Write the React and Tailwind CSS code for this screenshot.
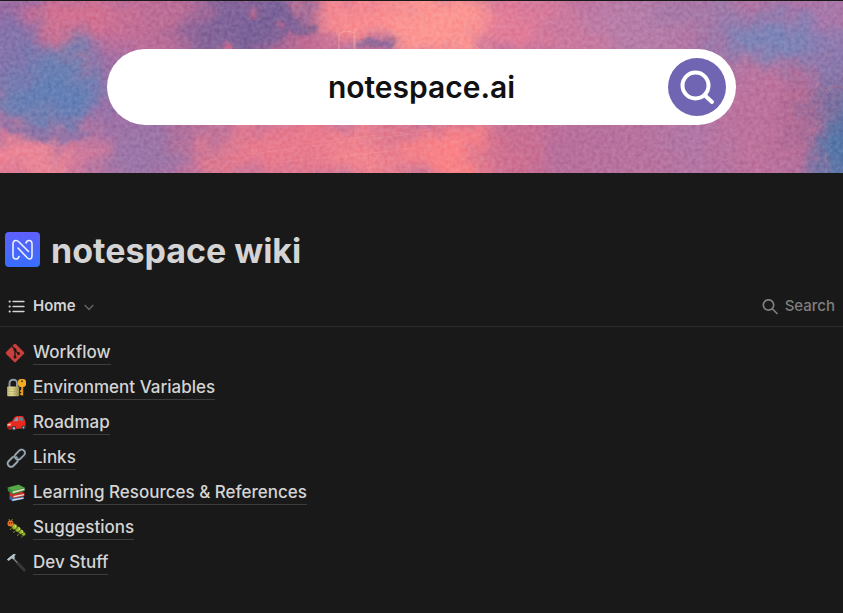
import React from "react";

const washes = [
  [20, 10, 60, 40, "#9a6ba2"], [95, 18, 60, 28, "#d47191"], [150, 45, 60, 30, "#c66f98"],
  [110, 95, 55, 50, "#a070a6"], [44, 84, 60, 46, "#7080b2"], [56, 98, 36, 26, "#6380b6"],
  [5, 50, 28, 34, "#8474ac"], [230, 26, 76, 40, "#80649a"], [160, 8, 40, 30, "#bd6e97"],
  [275, 15, 36, 30, "#79629a"], [330, 2, 34, 12, "#e97f92"], [372, 12, 60, 30, "#f98b90"],
  [300, 46, 32, 9, "#e06d8c"], [440, 25, 56, 42, "#fc9793"], [520, 24, 42, 36, "#e27d99"],
  [580, 26, 46, 36, "#cb7a9f"], [645, 22, 50, 36, "#b77eaa"], [710, 12, 52, 22, "#a57aa8"],
  [775, 38, 66, 28, "#8480b3"], [775, 42, 36, 17, "#7986b9"], [830, 6, 32, 18, "#a779ac"],
  [830, 62, 28, 24, "#8c7cb2"], [765, 88, 54, 26, "#bd749f"], [15, 160, 54, 24, "#ee7f91"],
  [48, 162, 44, 18, "#ee8998"], [92, 152, 26, 22, "#d27a9b"], [140, 155, 42, 38, "#9c76a8"],
  [195, 134, 34, 16, "#a9709d"], [235, 154, 50, 28, "#e07b91"], [305, 145, 60, 34, "#e97b8e"],
  [370, 152, 42, 34, "#f1848f"], [402, 133, 22, 18, "#dd7890"], [460, 152, 50, 34, "#f98388"],
  [530, 148, 46, 36, "#cc7092"], [590, 150, 50, 36, "#b8709d"], [650, 150, 52, 36, "#b8739f"],
  [710, 142, 50, 36, "#b277a6"], [762, 142, 42, 40, "#bd739d"], [800, 112, 24, 54, "#b46c96"],
  [842, 105, 32, 34, "#7f6f9f"], [846, 148, 34, 38, "#5577a8"],
];

function Painting() {
  return (
    <svg className="col-start-1 row-start-1 h-full w-full" viewBox="0 0 843 172" preserveAspectRatio="none" aria-hidden="true">
      <defs>
        <filter id="wash" x="-60" y="-60" width="963" height="292" filterUnits="userSpaceOnUse" colorInterpolationFilters="sRGB">
          <feGaussianBlur stdDeviation="12" result="soft" />
          <feTurbulence type="fractalNoise" baseFrequency="0.03" numOctaves="6" seed="8" result="noise" />
          <feDisplacementMap in="soft" in2="noise" scale="46" xChannelSelector="R" yChannelSelector="G" />
        </filter>
        <filter id="edge" x="-20%" y="-60%" width="140%" height="220%" colorInterpolationFilters="sRGB">
          <feGaussianBlur stdDeviation="2" result="soft" />
          <feTurbulence type="fractalNoise" baseFrequency="0.08" numOctaves="3" seed="3" result="noise" />
          <feDisplacementMap in="soft" in2="noise" scale="10" xChannelSelector="R" yChannelSelector="G" />
        </filter>
        <filter id="grain" x="0" y="0" width="100%" height="100%" colorInterpolationFilters="sRGB">
          <feTurbulence type="fractalNoise" baseFrequency="0.25" numOctaves="3" seed="5" />
          <feColorMatrix values="1 0 0 0 0  1 0 0 0 0  1 0 0 0 0  0 0 0 0 1" />
        </filter>
      </defs>
      <rect width="843" height="172" fill="#b571a0" />
      <g filter="url(#wash)">
        <rect x="-60" y="-60" width="963" height="292" fill="#b571a0" />
        {washes.map(([x, y, rx, ry, fill], i) => (
          <ellipse key={i} cx={x} cy={y} rx={rx} ry={ry} fill={fill} />
        ))}
      </g>
      <g filter="url(#edge)">
        <path d="M0 126 Q45 150 82 138 L100 128 Q65 136 0 118Z" fill="#8474a9" opacity=".7" />
        <path d="M270 3 L290 10 302 26 315 29 308 34 290 33 275 42 250 44 250 8Z" fill="#7b6398" opacity=".75" />
        <path d="M358 40Q380 36 398 41L390 46 362 46Z" fill="#7f6698" opacity=".8" />
        <path d="M302 25l12-2 5 4-4 4-10-1Z" fill="#80638f" opacity=".8" />
        <circle cx="253" cy="12" r="4" fill="#b9688f" />
        <circle cx="280" cy="22" r="3" fill="#c96a8c" />
        <circle cx="227" cy="47" r="4" fill="#d76f91" />
      </g>
      <g fill="none" stroke="#f2828b" strokeWidth=".7" opacity=".4">
        <path d="M785 99q8-10 15 0t13-8 15 2M790 120q3-25 12-31M802 110q16 3 21-14t20-9M812 142q2-25 17-34M795 150q10 8 8 21M820 125q9-4 8-13M826 149v22M814 80q8 15 23 5" />
        <path d="M815 65q8 12 28-5M828 75q-2 16 15 20M808 128q15-10 30-3" stroke="#7295bb" />
      </g>
      <path d="M339 48V33q6-5 15-1v16M355 48V27" fill="none" stroke="#ffc0a0" strokeWidth=".8" opacity=".6" />
      <g stroke="#ffac9d" strokeWidth=".7" opacity=".3">
        <path d="M250 153l160-20M270 162l120-12M300 143l130-15M355 125v47M370 125v47M330 158l130-18" />
      </g>
      <rect width="843" height="172" filter="url(#grain)" opacity=".3" className="mix-blend-soft-light" />
    </svg>
  );
}

const icon = "h-5 w-[21px] shrink-0";

function GitIcon() {
  return (
    <svg className={icon} viewBox="0 0 21 20" aria-hidden="true">
      <rect x="3" y="3" width="14" height="14" rx="1.5" transform="rotate(45 10 10)" fill="#c93f3c" />
      <path d="M7 3.2l3 3v8M10 7.2l3.4 3.4" stroke="#191919" strokeWidth="1.3" fill="none" />
      <g fill="#191919"><circle cx="10" cy="6.8" r="1.5" /><circle cx="10" cy="14" r="1.5" /><circle cx="13.5" cy="10.5" r="1.5" /></g>
    </svg>
  );
}

function LockIcon() {
  return (
    <svg className={icon} viewBox="-1.5 0 21 20" aria-hidden="true">
      <defs><linearGradient id="brass"><stop stopColor="#c6bd72" /><stop offset=".4" stopColor="#e4dc9b" /><stop offset="1" stopColor="#8d8546" /></linearGradient></defs>
      <path d="M3 10V5.500Q3 1.700 6.800 1.700T10.500 5.500V10" fill="none" stroke="#8b9ba5" strokeWidth="2" />
      <rect x=".7" y="8.500" width="12" height="9.700" rx=".7" fill="url(#brass)" />
      <path d="M1.200 11h11M1.200 13.500h11M1.200 16h11" stroke="#a69c5b" strokeWidth=".5" />
      <path d="M15.700 7v10.500M15.700 13h-2M15.700 16h-2" stroke="#e89b1c" strokeWidth="2" />
      <rect x="11.500" y="1" width="8" height="8" rx="3" fill="#f5ac25" />
      <circle cx="15.500" cy="3.300" r="1" fill="#59400f" />
    </svg>
  );
}

function CarIcon() {
  return (
    <svg className={icon} viewBox="-1.5 0 21 20" aria-hidden="true">
      <path d="M.5 11.500Q1.500 9 5.500 8.300L8 4.300Q9 3 12 3h3.500q1.500 0 2 2l1.500 4v5q0 1-1 1.300l-15 1.200Q.2 16 .5 11.500Z" fill="#e9291f" />
      <path d="M7 8.200l2.500-3.500q.7-.7 2-.7l.2 4Z" fill="#78a4b6" /><path d="M12.500 4h3l1.500 3.700h-4.500Z" fill="#5b8796" />
      <path d="M1 11l4-.5-1 2-3 .2Z" fill="#f8bba6" /><path d="M1 14l4 .3v1.200l-4-.2Z" fill="#7b1717" />
      <circle cx="7.500" cy="15.300" r="2.300" fill="#30343a" /><circle cx="7.500" cy="15.300" r="1.200" fill="#aebbc2" />
      <circle cx="17" cy="14.500" r="1.900" fill="#30343a" /><circle cx="17" cy="14.500" r=".9" fill="#aebbc2" />
    </svg>
  );
}

function ChainIcon() {
  return (
    <svg className={icon} viewBox="-1.5 0 21 20" fill="none" aria-hidden="true">
      <g transform="rotate(-45 10 10)">
        <rect x="-1" y="6.700" width="11.500" height="6.600" rx="3.300" stroke="#647079" strokeWidth="2.400" />
        <rect x="-1" y="6.700" width="11.500" height="6.600" rx="3.300" stroke="#b0bcc3" strokeWidth="1" />
        <rect x="9" y="6.700" width="11.500" height="6.600" rx="3.300" stroke="#59646c" strokeWidth="2.400" />
        <rect x="9" y="6.700" width="11.500" height="6.600" rx="3.300" stroke="#b0bcc3" strokeWidth="1" />
      </g>
    </svg>
  );
}

function BooksIcon() {
  return (
    <svg className={icon} viewBox="-1.5 0 21 20" aria-hidden="true">
      <path d="M3 13l11-1 3.500 2-.5 2-11 2.500L3 16Z" fill="#316cae" /><path d="M6 16.300l11-1.800v1.200L6 17.700Z" fill="#e5e2dc" />
      <path d="M3 9l11-1 4 2v3L7 15.500l-4-3Z" fill="#c82e25" /><path d="M7 13l10.500-2v1.200L7 14.500Z" fill="#e8e0d7" />
      <path d="M1 4.500L12 1.500l6.500 3.200-.3 3.300L6.500 11.500 1.500 8Z" fill="#3c8b3a" /><path d="M2 4.500L12 2l5.500 2.700L6 7.700Z" fill="#58a748" />
      <path d="M6 8.400l11.800-3v1.600L6.300 10.200Z" fill="#dfe2c9" />
    </svg>
  );
}

function BugIcon() {
  return (
    <svg className={icon} viewBox="-1.5 0 21 20" aria-hidden="true">
      <g stroke="#b19436" strokeWidth=".8"><path d="M3 3l-.5-2M5 3l1-2M5 10l-1.500 2M8 13l-1 2M12 16l-1 2M16 18l-1 1.500" /></g>
      <g fill="#9bbb2c" stroke="#38491b" strokeWidth=".7"><circle cx="17" cy="16" r="2" /><circle cx="14.300" cy="13.800" r="2.400" /><circle cx="11.300" cy="11.400" r="2.600" /><circle cx="8" cy="8.700" r="2.800" /></g>
      <path d="M8 6.500q2 1 1 3M12 9q2 1 1 3M15 12q2 1 1 3" stroke="#e1e96b" strokeWidth="1" fill="none" />
      <circle cx="4" cy="5.500" r="3" fill="#e4762c" /><circle cx="3" cy="5" r=".7" fill="#351e13" /><circle cx="5.200" cy="4.800" r=".7" fill="#351e13" />
    </svg>
  );
}

function HammerIcon() {
  return (
    <svg className={icon} viewBox="-1.5 0 21 20" aria-hidden="true">
      <path d="M6.500 5l5 5.500" stroke="#8a7d76" strokeWidth="1.500" />
      <path d="M11.500 10.500l6.200 6.500" stroke="#38393e" strokeWidth="2.800" strokeLinecap="round" />
      <path d="M.5 6.500L7 1l2.500.2-1.500 2L8.500 5 7 6.500 5.300 5.500 2 8Z" fill="#a9bac2" />
      <path d="M1 6.500L7.500 1.500" stroke="#d8e1e4" strokeWidth=".8" />
    </svg>
  );
}

const pages = [
  ["Workflow", GitIcon], ["Environment Variables", LockIcon], ["Roadmap", CarIcon],
  ["Links", ChainIcon], ["Learning Resources & References", BooksIcon],
  ["Suggestions", BugIcon], ["Dev Stuff", HammerIcon],
];

export default function App() {
  return (
    <div className="min-h-screen bg-[#191919] pt-px font-['Inter',sans-serif] text-[#d4d4d4]">
      <header className="grid h-[172px] grid-cols-1 grid-rows-1 overflow-hidden">
        <Painting />
        <form className="z-10 col-start-1 row-start-1 flex h-19 w-3/4 max-w-[629px] items-center self-center justify-self-center rounded-full bg-white pr-[10px] pl-[68px]" onSubmit={(e) => e.preventDefault()}>
          <input aria-label="Address" defaultValue="notespace.ai" className="min-w-0 flex-1 bg-transparent text-center text-[30px] font-semibold text-[#111111] outline-none" />
          <button aria-label="Go" className="grid size-[58px] shrink-0 place-items-center rounded-full bg-[#6f65b3]">
            <svg className="size-[58px]" viewBox="0 0 58 58" fill="none" stroke="#fff" strokeWidth="4" aria-hidden="true">
              <circle cx="27.500" cy="27.500" r="13" /><path d="M37 37.500L44 44" strokeLinecap="round" />
            </svg>
          </button>
        </form>
      </header>

      <main>
        <div className="flex items-start gap-[11px] pt-[59px] pl-[5px]">
          <svg className="size-[35px] shrink-0" viewBox="0 0 35 35" fill="none" aria-hidden="true">
            <defs><linearGradient id="tile" x2="0" y2="1"><stop stopColor="#5e60fa" /><stop offset="1" stopColor="#376dff" /></linearGradient></defs>
            <rect width="35" height="35" rx="4" fill="url(#tile)" />
            <path d="M14 24.500Q13.300 27 11 27 8 27 8 23.500V12Q8 8.500 11 8.500 12.500 8.500 14 10L23.500 19.500M13 16L22 25.500Q23.500 27 24.500 27 27 27 27 23.500V12Q27 8.500 24 8.500 21.700 8.500 21 11" stroke="#edf0ff" strokeWidth="1.600" strokeLinecap="round" />
          </svg>
          <h1 className="text-[34px] leading-[38px] font-bold">notespace wiki</h1>
        </div>

        <div className="mt-[17px] flex h-10 items-center justify-between border-b border-[#2b2b2b] px-2">
          <button className="flex items-center gap-2 text-[15px] font-semibold">
            <svg className="h-4 w-[17px]" viewBox="0 0 17 16" stroke="currentColor" strokeWidth="1.300" strokeLinecap="round" aria-hidden="true">
              <path d="M5 2.500h11M5 7.500h11M5 12.500h11" /><path d="M1.500 2.500h.4M1.500 7.500h.4M1.500 12.500h.4" strokeWidth="1.800" />
            </svg>
            Home
            <svg className="h-2 w-[10px]" viewBox="0 0 10 8" fill="none" stroke="#666666" strokeWidth="1.300" aria-hidden="true"><path d="M.7 2L5 6.500 9.300 2" /></svg>
          </button>
          <button className="flex items-center gap-[7px] text-[15px] font-medium text-[#7f7f7f]">
            <svg className="size-4" viewBox="0 0 16 16" fill="none" stroke="currentColor" strokeWidth="1.700" strokeLinecap="round" aria-hidden="true"><circle cx="6.500" cy="6" r="5.200" /><path d="M10.500 10L15 14.500" /></svg>
            Search
          </button>
        </div>

        <ul className="pt-2">
          {pages.map(([name, Icon]) => (
            <li key={name} className="flex h-[35px] items-center">
              <a href="#" className="flex items-center gap-[7px] pl-[5px] text-[17px] leading-6 font-medium">
                <Icon />
                <span className="border-b border-[#3d3d3d]">{name}</span>
              </a>
            </li>
          ))}
        </ul>
      </main>
    </div>
  );
}
